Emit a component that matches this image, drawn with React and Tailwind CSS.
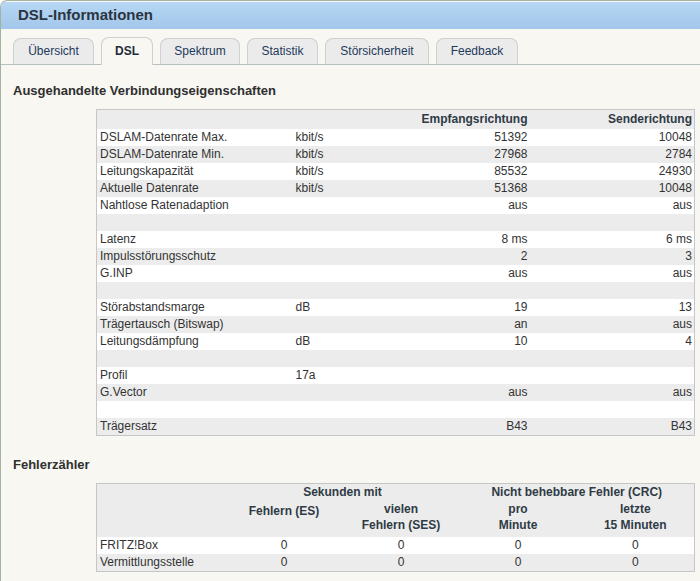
import React from "react";

const tabs = [
  { name: "Übersicht", w: "w-[81px]" },
  { name: "DSL", w: "w-[52px]", active: true },
  { name: "Spektrum", w: "w-[80px]" },
  { name: "Statistik", w: "w-[71px]" },
  { name: "Störsicherheit", w: "w-[104px]" },
  { name: "Feedback", w: "w-[82px]" },
];

// label, unit, empfang, sende
const rows = [
  ["DSLAM-Datenrate Max.", "kbit/s", "51392", "10048"],
  ["DSLAM-Datenrate Min.", "kbit/s", "27968", "2784"],
  ["Leitungskapazität", "kbit/s", "85532", "24930"],
  ["Aktuelle Datenrate", "kbit/s", "51368", "10048"],
  ["Nahtlose Ratenadaption", "", "aus", "aus"],
  ["", "", "", ""],
  ["Latenz", "", "8 ms", "6 ms"],
  ["Impulsstörungsschutz", "", "2", "3"],
  ["G.INP", "", "aus", "aus"],
  ["", "", "", ""],
  ["Störabstandsmarge", "dB", "19", "13"],
  ["Trägertausch (Bitswap)", "", "an", "aus"],
  ["Leitungsdämpfung", "dB", "10", "4"],
  ["", "", "", ""],
  ["Profil", "17a", "", ""],
  ["G.Vector", "", "aus", "aus"],
  ["", "", "", ""],
  ["Trägersatz", "", "B43", "B43"],
];

const fehler = [
  ["FRITZ!Box", "0", "0", "0", "0"],
  ["Vermittlungsstelle", "0", "0", "0", "0"],
];

export default function App() {
  return (
    <div className="w-[700px] h-[581px] overflow-hidden bg-white font-['Liberation_Sans',Arial,sans-serif] text-[#333]">
      <div className="h-full border-l border-t border-[#a4b2a2] rounded-tl-[7px] bg-[#f8f7f2] overflow-hidden">
        {/* Kopfzeile */}
        <div className="h-[27px] mt-px bg-gradient-to-b from-[#b6d7f5] to-[#a3c7ea] flex items-center pl-[17px]">
          <h1 className="text-[15px] font-bold text-[#2b3440]">DSL-Informationen</h1>
        </div>

        {/* Reiter */}
        <div className="flex items-end gap-[7px] pl-[12px] mt-[9px] border-b border-[#b9c0c0] h-[27px]">
          {tabs.map((t) => (
            <div
              key={t.name}
              className={`${t.w} rounded-t-[8px] border border-b-0 border-[#cfcfcf] flex items-center justify-center pb-[2px] text-[12px] ${
                t.active
                  ? "bg-[#f8f7f2] font-bold text-[#1f2b3a] h-[28px] -mb-px"
                  : "bg-[#ebebeb] text-[#1d3a5c] h-[26px]"
              }`}
            >
              {t.name}
            </div>
          ))}
        </div>

        <div className="pl-[12px]">
          <h2 className="text-[13px] font-bold mt-[18px] leading-[15px] text-[#2f2f2f]">
            Ausgehandelte Verbindungseigenschaften
          </h2>

          <table className="ml-[83px] mt-[11px] w-[598px] border border-[#c6c6c6] border-collapse table-fixed text-[12px] leading-[17px]">
            <colgroup>
              <col className="w-[196px]" />
              <col className="w-[100px]" />
              <col className="w-[138px]" />
              <col className="w-[164px]" />
            </colgroup>
            <thead>
              <tr className="bg-[#ececec] h-[19px]">
                <th></th>
                <th></th>
                <th className="text-right font-bold pr-[3px] text-[#2f3a45]">Empfangsrichtung</th>
                <th className="text-right font-bold pr-[2px] text-[#2f3a45]">Senderichtung</th>
              </tr>
            </thead>
            <tbody>
              {rows.map((r, i) => (
                <tr key={i} className={`h-[17px] ${i % 2 === 0 ? "bg-white" : "bg-[#ececec]"}`}>
                  <td className="pl-[3px] whitespace-nowrap">{r[0]}</td>
                  <td className="pl-[3px]">{r[1]}</td>
                  <td className="text-right pr-[3px]">{r[2]}</td>
                  <td className="text-right pr-[2px]">{r[3]}</td>
                </tr>
              ))}
            </tbody>
          </table>

          <h2 className="text-[13px] font-bold mt-[21px] leading-[15px] text-[#2f2f2f]">Fehlerzähler</h2>

          <table className="ml-[83px] mt-[11px] w-[598px] border border-[#c6c6c6] border-collapse table-fixed text-[12px] leading-[17px]">
            <colgroup>
              <col className="w-[129px]" />
              <col className="w-[117px]" />
              <col className="w-[117px]" />
              <col className="w-[117px]" />
              <col className="w-[118px]" />
            </colgroup>
            <thead className="bg-[#ececec] text-[#2f3a45]">
              <tr className="h-[18px]">
                <th></th>
                <th colSpan={2} className="font-bold text-center">Sekunden mit</th>
                <th colSpan={2} className="font-bold text-center">Nicht behebbare Fehler (CRC)</th>
              </tr>
              <tr className="h-[36px] align-top">
                <th></th>
                <th className="font-bold text-center pt-[2px]">Fehlern (ES)</th>
                <th className="font-bold text-center leading-[16px]">
                  vielen
                  <br />
                  Fehlern (SES)
                </th>
                <th className="font-bold text-center leading-[16px]">
                  pro
                  <br />
                  Minute
                </th>
                <th className="font-bold text-center leading-[16px]">
                  letzte
                  <br />
                  15 Minuten
                </th>
              </tr>
            </thead>
            <tbody>
              {fehler.map((r, i) => (
                <tr key={r[0]} className={`h-[17px] ${i % 2 === 0 ? "bg-white" : "bg-[#ececec]"}`}>
                  <td className="pl-[3px]">{r[0]}</td>
                  <td className="text-center">{r[1]}</td>
                  <td className="text-center">{r[2]}</td>
                  <td className="text-center">{r[3]}</td>
                  <td className="text-center">{r[4]}</td>
                </tr>
              ))}
            </tbody>
          </table>
        </div>
      </div>
    </div>
  );
}
